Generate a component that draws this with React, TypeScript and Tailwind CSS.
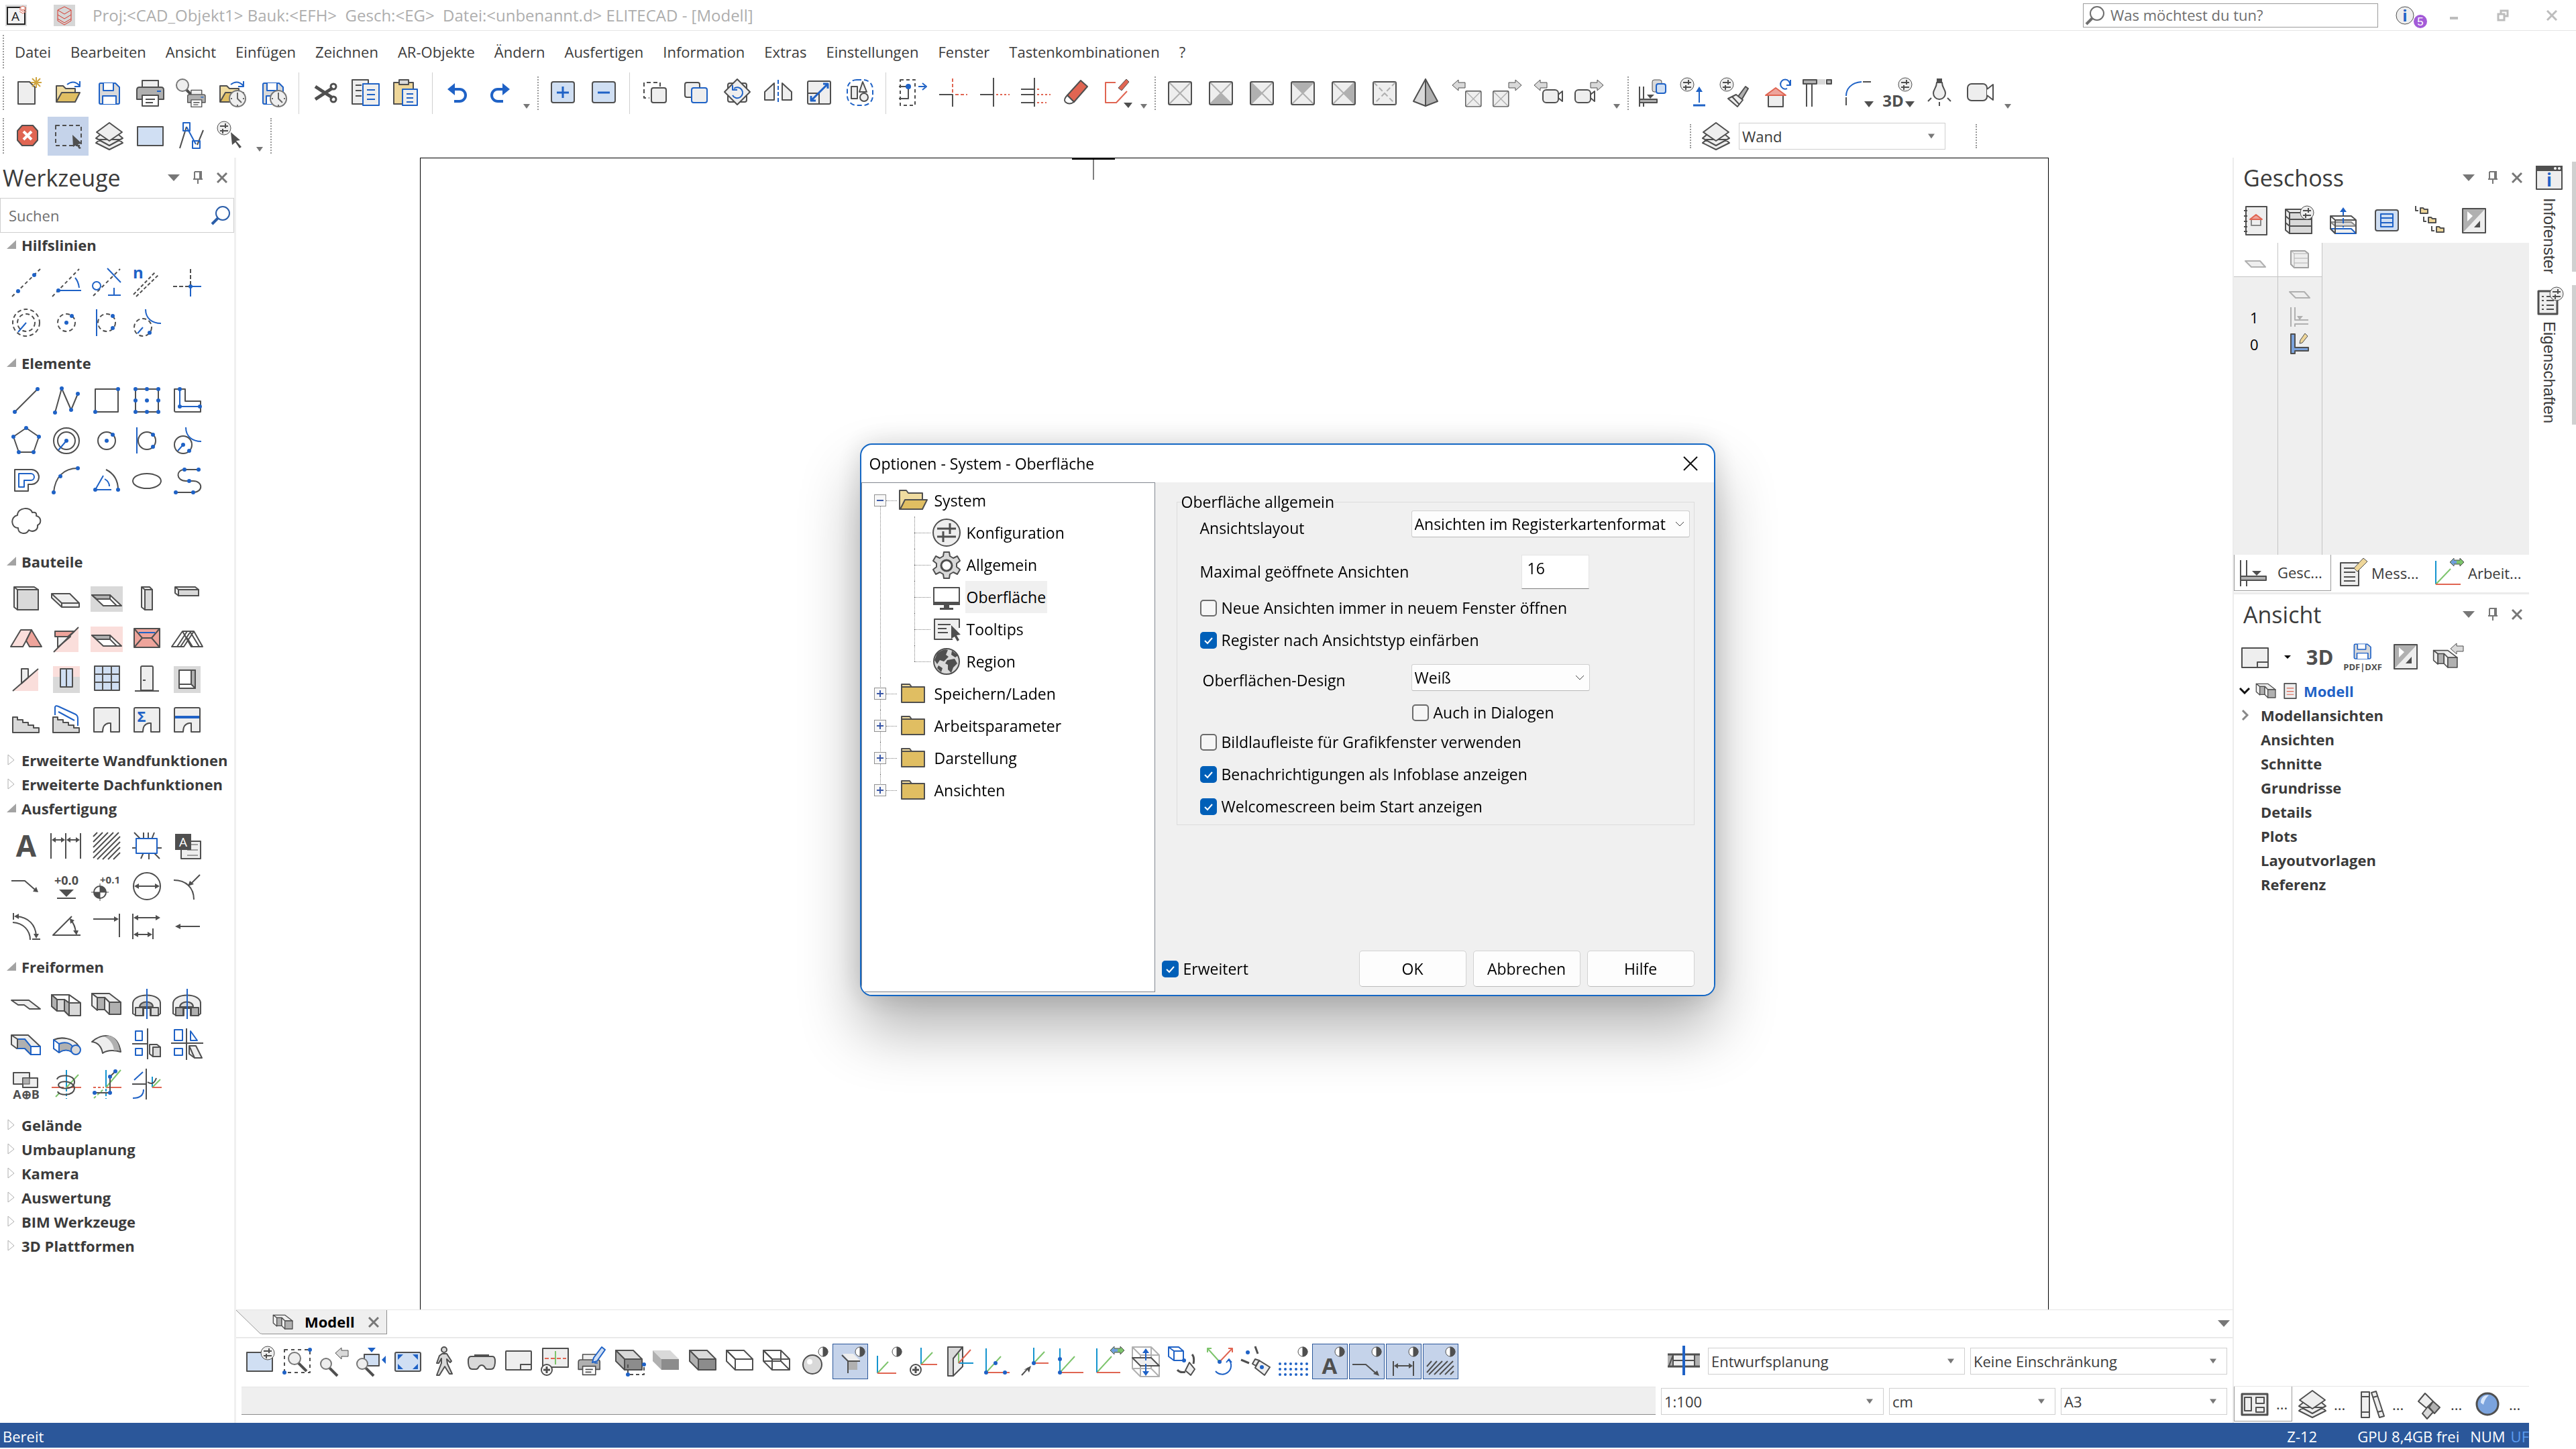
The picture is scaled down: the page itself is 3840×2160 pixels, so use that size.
import React, { useState } from 'react';
import clsx from 'clsx';

const K = '#4f4f4f';
const B = '#1f62c6';
const R = '#e06552';
const G = '#7dc46c';
const C = '#1494cf';
const LIGHT = '#eeeeee';
const MID = '#d9d9d9';
const DARK = '#b0b0b0';
const SKY = '#d0dff3';
const PINK = '#fadedb';
const ROSE = '#eea49b';

interface PProps {
  d: string;
  s?: string;
  f?: string;
  w?: number;
  dash?: string;
}

const P = ({ d, s = K, f = 'none', w = 2, dash }: PProps) => (
  <path d={d} stroke={s} fill={f} strokeWidth={w} strokeDasharray={dash} strokeLinejoin="round" />
);

const O = ({ x, y, r, s = K, f = 'none', w = 2, dash }: { x: number; y: number; r: number; s?: string; f?: string; w?: number; dash?: string }) => (
  <circle cx={x} cy={y} r={r} stroke={s} fill={f} strokeWidth={w} strokeDasharray={dash} />
);

// list of blue anchor points, "x,y x,y"
const Dots = ({ at, r = 3 }: { at: string; r?: number }) => (
  <>
    {at.split(' ').map((pt) => {
      const [x, y] = pt.split(',').map(Number);
      return <circle key={pt} cx={x} cy={y} r={r} fill={B} />;
    })}
  </>
);

const T = ({ x, y, size, fill = K, children }: { x: number; y: number; size: number; fill?: string; children: string }) => (
  <text x={x} y={y} fontSize={size} fontWeight={700} fill={fill} textAnchor="middle" fontFamily="Open Sans, sans-serif">
    {children}
  </text>
);

const Knobs = ({ x, y }: { x: number; y: number }) => (
  <>
    <O x={x} y={y} r={10} f={LIGHT} w={1} />
    <P d={`M${x - 6} ${y - 3}H${x + 6}M${x - 6} ${y + 4}H${x + 6}M${x + 2} ${y - 7}V${y}M${x - 2} ${y + 1}V${y + 8}`} />
  </>
);

const Half = () => (
  <>
    <O x={38} y={10} r={7} f="#fff" w={1} />
    <P d="M38 3A7 7 0 0 1 38 17Z" f={K} w={1} />
  </>
);

const Clock = () => (
  <>
    <O x={32} y={32} r={12} f={LIGHT} w={2} s="#777" />
    <P d="M32 23V32L38 38M22 32H24M40 32H42M32 41V43" w={2} s="#666" />
  </>
);

const Disk = () => (
  <>
    <P d="M9 11Q9 9 11 9H33L39 15V38Q39 40 37 40H11Q9 40 9 38Z" s={B} f={MID} />
    <P d="M15 9V20H30V9" s={B} f="#fff" />
    <P d="M14 40V28H34V40" s={B} f="#fff" />
  </>
);

const Folder = () => (
  <>
    <P d="M6 36V13H16L20 17H34V36Z" f="#f0dca0" />
    <P d="M6 37L14 23H41L34 37Z" f="#e0be62" />
    <P d="M22 11Q32 3 41 13M41 6V14H33" s={B} />
  </>
);

const Solid = () => (
  <>
    <P d="M2 8L10 14V33L2 26Z" f={LIGHT} />
    <P d="M2 8H28L45 21H28L21 14H10Z" f={LIGHT} />
    <P d="M10 14H21V32H10Z" f={DARK} />
    <P d="M21 14L28 21V39L21 32Z" f={LIGHT} />
    <P d="M28 21H45V39H28Z" f={DARK} />
  </>
);

const Layers = () => (
  <>
    <P d="M4 34L24 44L44 34L38 29H10ZM4 27L24 38L44 27L38 22H10Z" f={LIGHT} />
    <P d="M24 4L43 18L24 31L5 18Z" f={LIGHT} />
  </>
);

const XBox = ({ fill }: { fill?: string }) => (
  <>
    <rect x={7} y={7} width={34} height={34} rx={2} fill={LIGHT} />
    {fill && <path d={fill} fill={DARK} />}
    <P d="M8 8L40 40M40 8L8 40" s={DARK} />
    <rect x={7} y={7} width={34} height={34} rx={2} fill="none" stroke={K} strokeWidth={2} />
  </>
);

const Arrow = ({ x, flip = false }: { x: number; flip?: boolean }) => (
  <P
    d={flip ? `M${x} 12L${x - 9} 4V8H${x - 19}V16H${x - 9}V20Z` : `M${x} 12L${x + 9} 4V8H${x + 19}V16H${x + 9}V20Z`}
    f={MID}
    w={1}
  />
);

const Cam = ({ x, y }: { x: number; y: number }) => (
  <>
    <rect x={x} y={y} width={23} height={19} rx={5} fill={LIGHT} stroke={K} strokeWidth={2} />
    <P d={`M${x + 23} ${y + 7}L${x + 29} ${y + 2}V${y + 17}L${x + 23} ${y + 12}`} />
  </>
);

const Cube = ({ side = 'none', front = 'none', s = K }: { side?: string; front?: string; s?: string }) => (
  <>
    <P d="M4 8H30L43 21H17Z" f={side === 'none' ? 'none' : MID} s={s} />
    <P d="M4 8L17 21V37L4 24Z" f={side} s={s} />
    <P d="M17 21H43V37H17Z" f={front} s={s} />
  </>
);

const Arch = () => <P d="M5 8Q5 6 7 6H41Q43 6 43 8V42H30V29H27C20 30 18 36 18 42H5Z" f={LIGHT} />;

const Axes = ({ x = 8, y = 42 }: { x?: number; y?: number }) => (
  <>
    <P d={`M${x} ${y}L${x + 22} ${y - 24}`} s={G} />
    <P d={`M${x} ${y}V${y - 36}`} s={C} />
    <P d={`M${x} ${y}H${x + 35}`} s={R} />
  </>
);

const Lens = ({ x, y, r = 9, s = K }: { x: number; y: number; r?: number; s?: string }) => (
  <>
    <path d={`M${x + r - 3} ${y + r - 2}L${x + r + 9} ${y + r + 10}`} stroke={s} strokeWidth={4} />
    <O x={x} y={y} r={r} f={LIGHT} s="#777" />
  </>
);

const Printer = () => (
  <>
    <P d="M12 5H36V18H12Z" f={LIGHT} />
    <P d="M4 19Q4 15 8 15H40Q44 15 44 19V33H4Z" f={DARK} />
    <P d="M12 27H36V43H12Z" f="#fff" />
    <P d="M17 33H31M17 38H28" />
    <P d="M34 21H40" s={B} />
  </>
);

const icons: Record<string, React.ReactNode> = {
  // main toolbar
  neu: (
    <>
      <P d="M10 7H27L35 15V40H10Z" f={LIGHT} />
      <P d="M37 0V16M29 8H45M31 2L43 14M43 2L31 14" s="#cfa540" />
    </>
  ),
  oeffnen: <Folder />,
  speichern: <Disk />,
  drucken: <Printer />,
  vorschau: (
    <>
      <Lens x={11} y={12} r={9} />
      <g transform="translate(16 16) scale(.66)">
        <Printer />
      </g>
    </>
  ),
  oeffnenZeit: (
    <>
      <Folder />
      <Clock />
    </>
  ),
  speichernZeit: (
    <>
      <Disk />
      <Clock />
    </>
  ),
  schneiden: (
    <>
      <P d="M10 14L36 31M10 33L36 16" w={5} />
      <O x={37} y={14} r={4} w={3} />
      <O x={37} y={33} r={4} w={3} />
    </>
  ),
  kopieren: (
    <>
      <P d="M4 4H28V40H4Z" f={LIGHT} />
      <P d="M9 12H18M9 20H18M9 28H18" />
      <P d="M20 10H44V42H20Z" f={LIGHT} s={B} />
      <P d="M26 19H38M26 26H38M26 33H38" s={B} />
    </>
  ),
  einfuegen: (
    <>
      <P d="M5 8H34V40H5Z" f="#eed699" />
      <P d="M13 4H27V11H13Z" f={MID} />
      <P d="M18 18H40V42H18Z" f={LIGHT} s={B} />
      <P d="M24 25H34M24 31H34M24 37H34" s={B} />
    </>
  ),
  undo: (
    <>
      <P d="M14 18H26A9 9 0 0 1 26 36H18" s={B} w={4} />
      <path d="M8 18L19 9V27Z" fill={B} />
    </>
  ),
  redo: (
    <>
      <P d="M34 18H22A9 9 0 0 0 22 36H30" s={B} w={4} />
      <path d="M40 18L29 9V27Z" fill={B} />
    </>
  ),
  plus: (
    <>
      <rect x={7} y={7} width={34} height={31} rx={3} fill={SKY} stroke={K} strokeWidth={2} />
      <P d="M24 14V31M15 23H33" s={B} w={3} />
    </>
  ),
  minus: (
    <>
      <rect x={7} y={7} width={34} height={31} rx={3} fill={SKY} stroke={K} strokeWidth={2} />
      <P d="M15 23H33" s={B} w={3} />
    </>
  ),
  dupl: (
    <>
      <P d="M31 14V8H7V31H15" dash="6 4" />
      <rect x={18} y={16} width={22} height={22} rx={3} fill={LIGHT} stroke={K} strokeWidth={2} />
    </>
  ),
  duplBlau: (
    <>
      <rect x={7} y={8} width={22} height={22} rx={3} fill={LIGHT} stroke={K} strokeWidth={2} />
      <rect x={17} y={16} width={23} height={22} rx={3} fill={LIGHT} stroke={B} strokeWidth={2} />
    </>
  ),
  drehen: (
    <>
      <rect x={10} y={9} width={28} height={28} rx={3} fill={LIGHT} stroke={K} strokeWidth={2} />
      <P d="M24 3L43 22L24 41L5 22Z" f={LIGHT} />
      <P d="M19 17A8 8 0 1 1 17 27M17 12V19H24" s={B} />
    </>
  ),
  spiegeln: (
    <>
      <P d="M18 9V34H4V22ZM30 9V34H44V22Z" f={LIGHT} />
      <P d="M24 4V40" s={B} dash="6 3" />
    </>
  ),
  skalieren: (
    <>
      <rect x={7} y={6} width={34} height={34} rx={2} fill={LIGHT} stroke={K} strokeWidth={2} />
      <P d="M7 24H24V40" />
      <P d="M12 35L37 10M12 28V35H19M30 10H37V17" s={B} w={3} />
    </>
  ),
  gruppe: (
    <>
      <rect x={5} y={4} width={38} height={38} rx={14} fill="none" stroke={B} strokeWidth={2} strokeDasharray="7 4" />
      <P d="M11 14H20V32H11ZM28 7L34 22H23Z" f={LIGHT} />
      <O x={30} y={30} r={6} f={LIGHT} />
    </>
  ),
  strecken: (
    <>
      <P d="M7 4H29V42H7Z" dash="5 4" />
      <P d="M5 14H19V32H5" />
      <P d="M34 14H44M40 9L46 14L40 19" s={B} />
      <Dots at="19,14" r={4} />
    </>
  ),
  trim1: (
    <>
      <P d="M4 26H24V44" w={2} />
      <P d="M24 2V24M28 26H46" s={R} dash="5 3" />
    </>
  ),
  trim2: (
    <>
      <P d="M24 1V44M4 26H24" w={2} />
      <P d="M28 26H48" s={R} dash="3 3" />
    </>
  ),
  trim3: (
    <>
      <P d="M24 1V44M4 18H24M4 26H24M4 38H24" />
      <P d="M28 18H34M28 26H48M28 38H42" s={R} dash="3 3" />
    </>
  ),
  radierer: (
    <>
      <P d="M32 5L42 14L22 37L12 27Z" f={R} />
      <P d="M12 27L22 37Q15 42 9 37Q6 33 12 27Z" f="#fff" />
    </>
  ),
  radierLinie: (
    <>
      <P d="M23 8H8V38H24L40 21" s={R} />
      <P d="M39 3L43 7L32 20L27 16Z" f={R} w={1} />
      <path d="M35 38H48L42 46Z" fill={K} />
    </>
  ),
  box0: <XBox />,
  boxB: <XBox fill="M24 24L41 41H7Z" />,
  boxL: <XBox fill="M7 7L24 24L7 41Z" />,
  boxT: <XBox fill="M7 7H41L24 24Z" />,
  boxR: <XBox fill="M41 7L24 24L41 41Z" />,
  boxX: (
    <>
      <rect x={7} y={7} width={34} height={34} rx={2} fill={LIGHT} stroke={K} strokeWidth={2} />
      <P d="M8 8L40 40M40 8L8 40" s={DARK} dash="7 4" />
    </>
  ),
  pyramide: (
    <>
      <P d="M24 3L42 36L24 43Z" f={DARK} />
      <P d="M24 3L6 36L24 43Z" f={MID} />
    </>
  ),
  boxVor: (
    <>
      <Arrow x={3} />
      <g transform="translate(18 16) scale(.68)">
        <XBox />
      </g>
    </>
  ),
  boxNach: (
    <>
      <Arrow x={45} flip />
      <g transform="translate(-2 16) scale(.68)">
        <XBox />
      </g>
    </>
  ),
  camVor: (
    <>
      <Arrow x={3} />
      <Cam x={16} y={19} />
    </>
  ),
  camNach: (
    <>
      <Arrow x={45} flip />
      <Cam x={3} y={19} />
    </>
  ),
  wandKopie: (
    <>
      <rect x={23} y={4} width={14} height={18} rx={3} fill={MID} stroke={K} />
      <rect x={29} y={10} width={14} height={14} rx={3} fill={SKY} stroke={B} strokeWidth={2} />
      <P d="M4 14V44M10 14V32M10 38V44" />
      <P d="M4 33H30V38H4Z" f={DARK} />
      <path d="M15 26H26L20 32Z" fill={K} />
    </>
  ),
  hoehe: (
    <>
      <Knobs x={14} y={11} />
      <P d="M32 18V38" s={B} />
      <path d="M32 14L37 22H27Z" fill={B} />
      <P d="M23 42H41" s={B} w={3} />
    </>
  ),
  pinsel: (
    <>
      <Knobs x={12} y={11} />
      <P d="M28 30L40 14L44 17L34 34" f={DARK} />
      <P d="M14 32L26 26L36 34L28 44Z" f={LIGHT} />
      <P d="M20 29L31 41" />
    </>
  ),
  hausDrehen: (
    <>
      <P d="M13 27H35V44H13Z" f={LIGHT} />
      <P d="M24 16L39 27H9Z" f={ROSE} s={R} />
      <P d="M41 17A7 7 0 1 1 45 12M46 4V12H40" s={B} />
    </>
  ),
  traeger: (
    <>
      <P d="M4 4H24V10H4Z" f={DARK} />
      <P d="M26 4H36V10H26Z" f={MID} s={MID} />
      <P d="M39 4H46V10H39Z" f={DARK} />
      <P d="M9 10V44M17 10V44" />
    </>
  ),
  bogenWand: (
    <>
      <P d="M30 7C14 8 7 18 7 28" s={B} />
      <P d="M32 7H44M7 30V42" />
      <path d="M34 36H48L41 45Z" fill={K} />
    </>
  ),
  dreiD: (
    <>
      <Knobs x={34} y={11} />
      <T x={16} y={44} size={24}>
        3D
      </T>
      <path d="M34 36H48L41 45Z" fill={K} />
    </>
  ),
  lampe: (
    <>
      <path d="M20 2H28V8H20Z" fill={K} />
      <P d="M20 8C20 16 15 18 15 24A9 9 0 0 0 33 24C33 18 28 16 28 8Z" f={LIGHT} />
      <P d="M12 31L7 36M36 31L41 36M24 37V43" />
    </>
  ),
  kamera: (
    <>
      <rect x={5} y={10} width={29} height={25} rx={6} fill={LIGHT} stroke={K} strokeWidth={2} />
      <P d="M34 18L43 11V34L34 27" f="#fff" />
    </>
  ),
  // second toolbar
  stop: (
    <>
      <P d="M16 8H32L39 16V30L32 38H16L9 30V16Z" f={R} s={K} />
      <P d="M18 17L30 29M30 17L18 29" s="#fff" w={4} />
    </>
  ),
  auswahl: (
    <>
      <P d="M5 8H43V38H5Z" dash="6 4" />
      <path d="M30 22L44 35L38 36L43 42L40 43L36 37L31 40Z" fill={K} />
    </>
  ),
  ebenen: <Layers />,
  rechteck: <P d="M5 10H43V38H5Z" f={SKY} />,
  polySel: (
    <>
      <P d="M7 42L17 10" />
      <P d="M33 37L42 15" />
      <P d="M17 10L31 36M12 4H22V16H12ZM26 31H37V42H26Z" s={B} />
    </>
  ),
  pickSet: (
    <>
      <Knobs x={12} y={12} />
      <path d="M22 18L36 30L30 31L38 40L35 42L29 33L24 37Z" fill={K} />
    </>
  ),
  // Hilfslinien
  h1: (
    <>
      <P d="M3 45L45 4" dash="5 4" />
      <Dots at="12,37 36,13" />
    </>
  ),
  h2: (
    <>
      <P d="M3 45L43 4" dash="5 4" />
      <P d="M12 36H46M37 17Q42 23 43 32" s={B} />
      <Dots at="12,36" />
    </>
  ),
  h3: (
    <>
      <P d="M4 44L44 4" dash="5 4" />
      <P d="M25 3L45 24M26 43H45M35 32V43" s={B} />
      <O x={9} y={29} r={6} s={B} />
    </>
  ),
  h4: (
    <>
      <P d="M4 42L37 8M8 45L42 12" dash="5 3" />
      <T x={11} y={18} size={24} fill={B}>
        n
      </T>
    </>
  ),
  h5: (
    <>
      <P d="M3 30H29M29 4V30" dash="6 3" />
      <P d="M29 30H45M29 30V45" s={B} />
      <Dots at="29,30" />
    </>
  ),
  h6: (
    <>
      <O x={24} y={24} r={20} dash="6 4" />
      <O x={24} y={24} r={13} dash="6 4" />
      <P d="M24 24L12 38" s={B} />
    </>
  ),
  h7: (
    <>
      <O x={24} y={24} r={13} dash="6 4" />
      <Dots at="24,24 32,14" />
    </>
  ),
  h8: (
    <>
      <P d="M9 4V44" s={B} />
      <O x={24} y={24} r={13} dash="6 4" />
      <Dots at="33,14 33,32" />
    </>
  ),
  h9: (
    <>
      <O x={18} y={31} r={13} dash="6 4" />
      <P d="M18 31L10 40M22 4C22 18 32 25 45 25" s={B} />
      <Dots at="28,39" />
    </>
  ),
  // Elemente
  e1: (
    <>
      <P d="M7 41L41 7" />
      <Dots at="7,41 41,7" />
    </>
  ),
  e2: (
    <>
      <P d="M7 42L17 6L31 38L41 14" />
      <Dots at="7,42 17,6 31,38 41,14" />
    </>
  ),
  e3: (
    <>
      <P d="M7 7H41V41H7Z" />
      <Dots at="41,7 7,41" />
    </>
  ),
  e4: (
    <>
      <P d="M7 7H41V41H7Z" />
      <Dots at="7,7 24,7 41,7 7,24 24,24 41,24 7,41 24,41 41,41" />
    </>
  ),
  e5: (
    <>
      <P d="M5 7H21V25H44V41H7Q5 41 5 39Z" />
      <P d="M13 7V33H43" s={B} />
      <Dots at="13,7 13,33 43,33" />
    </>
  ),
  e6: (
    <>
      <P d="M24 5L43 18L35 41H13L5 18Z" />
      <Dots at="24,5 43,18 35,41 13,41 5,18" />
    </>
  ),
  e7: (
    <>
      <O x={24} y={24} r={19} />
      <O x={24} y={24} r={13} />
      <P d="M24 24L12 38" s={B} />
      <Dots at="24,24" />
    </>
  ),
  e8: (
    <>
      <O x={24} y={24} r={13} />
      <Dots at="24,24 33,15" />
    </>
  ),
  e9: (
    <>
      <P d="M9 4V43" s={B} />
      <O x={24} y={24} r={13} />
      <Dots at="33,15 33,33" />
    </>
  ),
  e10: (
    <>
      <O x={18} y={30} r={13} />
      <P d="M18 30L10 39M22 4C22 18 32 25 45 25" s={B} />
      <Dots at="18,30 27,39" />
    </>
  ),
  e11: (
    <>
      <P d="M7 7H32A11 11 0 0 1 32 29H27V39H7Z" />
      <P d="M13 13H31A5 5 0 0 1 31 23H21V33H13Z" s={B} />
    </>
  ),
  e12: (
    <>
      <P d="M5 41C7 18 20 5 41 5" />
      <Dots at="5,41 15,17 41,5" />
    </>
  ),
  e13: (
    <>
      <P d="M23 7Q41 16 41 37" />
      <P d="M19 16L7 37H31M21 21Q28 25 28 32" s={B} />
      <Dots at="7,37 41,37" />
    </>
  ),
  e14: <ellipse cx={24} cy={24} rx={21} ry={11} fill="none" stroke={K} strokeWidth={2} />,
  e15: (
    <>
      <P d="M41 7H20C7 7 7 24 22 24H33C48 24 48 41 33 41H7" />
      <Dots at="20,7 41,7 27,24 33,41 7,41" />
    </>
  ),
  e16: <P d="M11 15C11 3 31 2 33 11C38 10 40 12 39 16C47 18 47 27 41 30C42 38 33 41 28 37C24 45 12 43 12 34C1 34 0 17 11 15Z" />,
  // Bauteile
  b1: (
    <>
      <P d="M6 6H36L42 10V40H11L6 36Z" f={LIGHT} />
      <P d="M11 10H42V40H11Z" f={MID} />
      <P d="M6 6L11 10" />
    </>
  ),
  b2: (
    <>
      <P d="M2 16H29L43 30V36H17L2 22Z" f={LIGHT} />
      <P d="M2 16L17 30H43M17 30V36" />
    </>
  ),
  b3: (
    <>
      <rect x={0} y={5} width={48} height={38} fill={MID} />
      <P d="M2 18H29L46 34H19Z" f="#fff" />
      <P d="M2 18H29V24H9Z" f={DARK} />
      <P d="M29 24L39 34" />
    </>
  ),
  b4: (
    <>
      <P d="M16 6H28L32 10V40H21L16 36Z" f={LIGHT} />
      <P d="M21 10H32V40H21ZM16 6L21 10" f={MID} />
    </>
  ),
  b5: (
    <>
      <P d="M6 6H36L41 10V19H11L6 15Z" f={LIGHT} />
      <P d="M11 10H41V19H11ZM6 6L11 10" f={MID} />
    </>
  ),
  b6: (
    <>
      <P d="M1 35L16 10H32L24 26L19 35Z" f={PINK} />
      <P d="M32 10L47 35H29L24 26Z" f={ROSE} />
    </>
  ),
  b7: (
    <>
      <path d="M42 6V43H5Z" fill={PINK} />
      <P d="M11 20V36L30 20Z" f={LIGHT} />
      <P d="M7 12H36L26 20H7Z" f={ROSE} />
      <P d="M42 6L5 43" />
    </>
  ),
  b8: (
    <>
      <rect x={0} y={5} width={48} height={38} fill={PINK} />
      <P d="M2 18H29L46 34H19Z" f="#fff" />
      <P d="M2 18H29V24H9Z" f={DARK} />
      <P d="M29 24L39 34" />
    </>
  ),
  b9: (
    <>
      <P d="M5 8H43V36H5Z" f={ROSE} />
      <P d="M5 8L17 22L5 36M43 8L31 22L43 36M17 22H31" />
      <P d="M12 14H36" s={B} />
    </>
  ),
  b10: (
    <>
      <P d="M1 35H19L34 12L47 35H30L17 12Z" />
      <P d="M9 35L24 12M14 35L28 14M24 22L32 35M17 12H34M28 12L42 35" />
    </>
  ),
  b11: (
    <>
      <path d="M42 8V41H6Z" fill={PINK} />
      <P d="M17 30V8H27V21Z" f={LIGHT} />
      <P d="M42 8L4 41" />
    </>
  ),
  b12: (
    <>
      <rect x={4} y={4} width={40} height={16} fill={PINK} />
      <rect x={4} y={20} width={40} height={24} fill={MID} />
      <P d="M15 8H33V35H15ZM24 8V35" f={SKY} />
    </>
  ),
  b13: <P d="M6 4H43V40H6ZM18 4V40M31 4V40M6 16H43M6 28H43" f={SKY} />,
  b14: (
    <>
      <P d="M15 40V6Q15 4 17 4H31Q33 4 33 6V40Z" f={LIGHT} />
      <P d="M6 41H42M18 25H22" />
    </>
  ),
  b15: (
    <>
      <rect x={4} y={4} width={40} height={40} fill={MID} />
      <P d="M12 10H36V37H12Z" f="#fff" />
      <P d="M30 10H36V37L30 31Z" f={DARK} />
      <P d="M12 31H30" />
    </>
  ),
  b16: <P d="M4 20H11V24H19V28H27V32H35V36H43V43H4Z" f={MID} />,
  b17: (
    <>
      <P d="M4 20H11V24H19V28H27V32H35V36H43V43H4Z" f={MID} />
      <P d="M7 17V5Q8 2 12 4L38 16Q41 18 41 22V33M12 12L36 25" s={B} />
    </>
  ),
  b18: <Arch />,
  b19: (
    <>
      <Arch />
      <T x={16} y={27} size={22} fill={B}>
        Σ
      </T>
    </>
  ),
  b20: (
    <>
      <Arch />
      <P d="M6 20H42" s={B} w={4} />
    </>
  ),
  // Ausfertigung
  a1: (
    <T x={24} y={40} size={44}>
      A
    </T>
  ),
  a2: (
    <>
      <P d="M1 5V43M23 5V43M45 5V43M4 15H20M26 15H42" />
      <path d="M2 15L8 11V19ZM22 15L16 11V19ZM24 15L30 11V19ZM44 15L38 11V19Z" fill={K} />
    </>
  ),
  a3: <P d="M4 10L10 4M4 18L18 4M4 26L26 4M4 34L34 4M4 42L42 4M10 44L44 10M18 44L44 18M26 44L44 26M34 44L44 34" />,
  a4: (
    <>
      <P d="M2 27H46M5 4L43 43M19 4V14M26 4V14M35 4L31 14M27 34V44M15 43L19 34" />
      <P d="M8 13H39V35H8Z" f="#fff" s={B} />
    </>
  ),
  a5: (
    <>
      <P d="M15 17H44V43H15Z" f={LIGHT} />
      <P d="M24 22H40M24 30H40M24 38H40" w={1} />
      <rect x={6} y={6} width={24} height={24} fill={K} />
      <text x={18} y={25} fontSize={19} fill="#fff" textAnchor="middle" fontFamily="Open Sans, sans-serif">
        A
      </text>
    </>
  ),
  a6: (
    <>
      <P d="M2 16H22L38 30" />
      <path d="M42 33L34 32L39 25Z" fill={K} />
    </>
  ),
  a7: (
    <>
      <T x={24} y={22} size={18}>
        +0.0
      </T>
      <path d="M13 29H35L24 40Z" fill={K} />
      <P d="M10 42H38" />
    </>
  ),
  a8: (
    <>
      <T x={29} y={20} size={15}>
        +0.1
      </T>
      <O x={14} y={33} r={9} f="#fff" />
      <path d="M14 33V24A9 9 0 0 1 23 33ZM14 33V42A9 9 0 0 1 5 33Z" fill={K} />
      <P d="M1 33H27M14 20V46" w={1} />
    </>
  ),
  a9: (
    <>
      <O x={24} y={24} r={20} />
      <P d="M8 24H40" />
      <path d="M5 24L12 20V28ZM43 24L36 20V28Z" fill={K} />
    </>
  ),
  a10: (
    <>
      <P d="M4 15C22 15 34 26 34 44M43 7L30 20" />
      <path d="M25 24L28 16L34 21Z" fill={K} />
    </>
  ),
  a11: (
    <>
      <P d="M4 18C20 19 30 30 30 44M9 9C28 10 38 22 39 38M5 4V14M33 43H45" />
      <path d="M6 9L13 5V13ZM39 42L35 35H43Z" fill={K} />
    </>
  ),
  a12: (
    <>
      <P d="M32 9L4 37H45M31 15Q37 22 38 33" />
      <path d="M29 12L36 15L30 20ZM39 37L34 30L42 30Z" fill={K} />
    </>
  ),
  a13: (
    <>
      <P d="M4 13H38M43 5V40" />
      <path d="M42 13L35 9V17Z" fill={K} />
    </>
  ),
  a14: (
    <>
      <P d="M3 5V43M8 11H40M8 36H28M33 27V43" />
      <path d="M4 11L11 7V15ZM44 11L37 7V15ZM4 36L11 32V40ZM32 36L25 32V40Z" fill={K} />
    </>
  ),
  a15: (
    <>
      <P d="M12 24H43" />
      <path d="M6 24L14 20V28Z" fill={K} />
    </>
  ),
  // Freiformen
  f1: <P d="M2 18H28L45 31H29L21 25H12Z" f={LIGHT} />,
  f2: (
    <>
      <P d="M2 10H28L45 22V41H28L21 34H10L2 27Z" f={MID} />
      <P d="M2 10H28L45 22H28L21 17H10Z" f="#fff" />
      <P d="M2 10L10 17V34L2 27ZM21 17L28 22V41L21 34Z" f={DARK} />
      <P d="M28 10V22" />
    </>
  ),
  f3: <Solid />,
  f4: (
    <>
      <P d="M3 24C2 6 46 6 44 24V38L40 41H29V30H19V41H8L3 38Z" f={LIGHT} />
      <P d="M13 28C14 18 33 18 33 28Z" f={DARK} />
      <P d="M7 29H18V41H7ZM30 29H41V41H30Z" f={MID} />
      <P d="M24 1V46" s={B} />
    </>
  ),
  f5: (
    <>
      <P d="M3 24C2 6 46 6 44 24V38L40 41H29V30H19V41H8L3 38Z" f={LIGHT} />
      <P d="M13 28C14 18 33 18 33 28Z" f={MID} />
      <P d="M7 29H18V41H7ZM30 29H41V41H30Z" f={DARK} />
      <P d="M24 1V46" s={B} />
    </>
  ),
  f6: (
    <>
      <P d="M2 10H27L45 27V39H31L22 30H10L2 24Z" f={LIGHT} />
      <P d="M11 16H22L31 27V39L22 30H11Z" f={DARK} s={B} />
      <P d="M31 27H45V39H31Z" f="#fff" s={B} />
      <P d="M2 10L11 16V30" />
    </>
  ),
  f7: (
    <>
      <P d="M5 17C16 12 34 14 42 26V34C32 30 20 31 13 36L5 30Z" f={LIGHT} />
      <P d="M13 23C22 19 30 22 33 27V36C26 31 19 32 13 36Z" f={DARK} s={B} />
      <P d="M5 17L13 23V36L5 30Z" f="#fff" s={B} />
      <O x={38} y={32} r={7} s={B} f={MID} />
    </>
  ),
  f8: (
    <>
      <P d="M2 20C16 7 40 5 45 35C34 32 24 33 18 37C16 26 10 21 2 20Z" f={LIGHT} />
      <path d="M20 12C32 18 34 26 35 33L43 33C43 20 34 11 27 11Z" fill={DARK} />
    </>
  ),
  f9: (
    <>
      <P d="M2 23H25M25 0V46" />
      <P d="M7 4H17V18H7ZM7 30H17V40H7Z" s={B} />
      <P d="M28 24H39L44 28V42H33L28 38Z" f={LIGHT} />
      <P d="M33 28H44V42H33Z" f={MID} />
    </>
  ),
  f10: (
    <>
      <P d="M0 22H48M23 0V47" />
      <P d="M5 2H17V18H5ZM5 30H17V40H5ZM29 4V18H39Z" s={B} />
      <P d="M27 26H37L46 44H35L27 38Z" f={LIGHT} />
      <P d="M27 26L35 44" />
    </>
  ),
  f11: (
    <>
      <P d="M5 6H29V23H5Z" f={LIGHT} />
      <P d="M19 14H41V28H19Z" f={LIGHT} />
      <rect x={19} y={14} width={10} height={9} fill={DARK} stroke={K} />
      <T x={24} y={45} size={18}>
        A⊕B
      </T>
    </>
  ),
  f12: (
    <>
      <P d="M24 2V28" s={C} />
      <P d="M24 30V45" s={C} dash="4 3" />
      <P d="M24 28H46M2 28H20" s={R} />
      <P d="M24 28L42 9M8 42L14 36" s={G} />
      <P d="M10 16C12 8 36 8 36 20C36 32 12 32 12 24C14 16 36 18 36 30C34 42 12 40 11 34" />
    </>
  ),
  f13: (
    <>
      <P d="M23 2V28" s={C} />
      <P d="M23 30V45" s={C} dash="4 3" />
      <P d="M23 28H46" s={R} />
      <P d="M4 28H20" s={R} dash="4 3" />
      <P d="M23 28L45 2" s={G} />
      <P d="M5 44L20 30" s={G} dash="4 3" />
      <P d="M6 36H29V12L37 4" />
      <Dots at="6,36 29,36 29,12 37,4" />
    </>
  ),
  f14: (
    <>
      <P d="M2 23H23M23 0V46" />
      <P d="M5 17L18 5M3 44Q19 44 19 31" s={B} />
      <P d="M32 28V12" s={C} />
      <P d="M32 28L44 16" s={G} />
      <P d="M32 28H46" s={R} />
      <P d="M25 20Q34 26 38 14" />
    </>
  ),
  // view toolbar
  v1: (
    <>
      <P d="M4 11H42V39H4Z" f={SKY} />
      <Knobs x={35} y={12} />
    </>
  ),
  v2: (
    <>
      <P d="M5 7H43V41H5Z" dash="5 5" />
      <Dots at="43,7 5,41" />
      <Lens x={20} y={20} r={9} />
    </>
  ),
  v3: (
    <>
      <Lens x={12} y={28} r={8} />
      <P d="M26 12L35 4V8H45V17H35V21Z" f={MID} w={1} />
    </>
  ),
  v4: (
    <>
      <path d="M19 4H31L25 11ZM46 16V28L40 22Z" fill={B} />
      <P d="M14 14H36V31H14Z" f={SKY} />
      <Lens x={11} y={28} r={8} />
    </>
  ),
  v5: (
    <>
      <rect x={5} y={11} width={38} height={28} rx={2} fill={SKY} stroke={K} strokeWidth={2} />
      <path d="M9 14H17L9 22ZM39 14H31L39 22ZM9 36H17L9 28ZM39 36H31L39 28Z" fill={B} />
    </>
  ),
  v6: (
    <>
      <O x={23} y={7} r={4} f={MID} />
      <P d="M20 13H27L34 24L32 26L27 21L28 28L35 43H31L24 32L16 45H12L19 27V20L15 27H12L16 16Z" f={MID} />
    </>
  ),
  v7: (
    <>
      <path d="M13 14H35V19H13Z" fill={K} />
      <P d="M8 17H40Q44 17 44 24Q44 36 38 36H32Q30 36 28 32Q24 28 20 32Q18 36 16 36H10Q4 36 4 24Q4 17 8 17Z" f={MID} />
    </>
  ),
  v8: (
    <>
      <rect x={5} y={9} width={38} height={28} rx={1} fill={LIGHT} stroke={K} strokeWidth={2} />
      <P d="M43 29H27V37" />
    </>
  ),
  v9: (
    <>
      <P d="M5 5H43V33H5Z" f={LIGHT} />
      <P d="M24 9V29" s={G} />
      <P d="M8 20H40" s={R} dash="6 3" />
      <O x={11} y={37} r={8} f="#fff" />
      <P d="M11 32V42M6 37H16" w={3} />
    </>
  ),
  v10: (
    <>
      <g transform="translate(0 10) scale(.8)">
        <Printer />
      </g>
      <P d="M38 3L43 7L31 24L24 26L26 19Z" f={SKY} s={B} />
    </>
  ),
  v11: (
    <>
      <Cube side={DARK} front="#8c8c8c" />
      <P d="M22 29V44H46V29" dash="5 4" />
      <Dots at="46,29 22,44" />
    </>
  ),
  v12: <Cube side={DARK} front="#8c8c8c" s="none" />,
  v13: <Cube side={DARK} front="#8c8c8c" />,
  v14: <Cube />,
  v15: (
    <>
      <Cube />
      <P d="M30 8V24L43 37M4 24H30" />
    </>
  ),
  v16: (
    <>
      <O x={22} y={29} r={14} f={MID} />
      <circle cx={18} cy={25} r={4} fill="#fff" />
      <Half />
    </>
  ),
  v17: (
    <>
      <path d="M12 13H28L38 23H21Z" fill={LIGHT} />
      <rect x={20} y={24} width={14} height={13} fill={DARK} />
      <P d="M11 15L20 24H38M20 24V42" />
      <Half />
    </>
  ),
  v18: (
    <>
      <P d="M9 42V16" s={C} />
      <P d="M9 42L25 25" s={G} />
      <P d="M9 42H37" s={R} />
      <Half />
    </>
  ),
  v19: (
    <>
      <P d="M19 29V4" s={C} />
      <P d="M19 29L36 11" s={G} />
      <P d="M19 29H43" s={R} />
      <O x={11} y={37} r={8} f="#fff" />
      <P d="M11 32V42M6 37H16" w={3} />
    </>
  ),
  v20: (
    <>
      <P d="M4 3H26V12L12 20V46H4Z" f={MID} />
      <P d="M12 20L26 3V32L12 46Z" f={LIGHT} />
      <P d="M20 27H42" s={C} />
      <P d="M20 27V12" s={G} />
      <P d="M20 27L38 7" s={R} />
    </>
  ),
  v21: (
    <>
      <Axes x={6} y={41} />
      <Dots at="6,41 20,27 34,41" />
    </>
  ),
  v22: (
    <>
      <P d="M22 27V4" s={C} />
      <P d="M22 27L38 10" s={G} />
      <P d="M22 27H44" s={R} />
      <Dots at="22,27" />
      <P d="M4 45L14 34" />
      <path d="M18 31L15 41L12 36L7 37Z" fill={K} />
    </>
  ),
  v23: (
    <>
      <Axes x={6} y={41} />
      <Dots at="6,41 6,21" />
    </>
  ),
  v24: (
    <>
      <Axes x={6} y={41} />
      <P d="M26 8L32 2V5H41V2L47 8L41 14V11H32V14Z" f={G} w={1} />
      <path d="M27 8L32 3V6H37V10H32V13Z" fill="#6f9ddf" />
    </>
  ),
  v25: (
    <>
      <P d="M4 3H32L44 15V47H16L4 35ZM4 3L16 15H44M16 15V47M32 3V35H4M32 35L44 47" s={DARK} />
      <P d="M4 19H32L44 31H16Z" f={LIGHT} />
      <P d="M24 9V42" s={B} dash="14 5" />
      <path d="M24 5L29 12H19ZM24 46L29 39H19Z" fill={B} />
    </>
  ),
  v26: (
    <>
      <P d="M3 3H18L25 9V23H11L3 17ZM3 3L11 9H25M11 9V23" s={B} />
      <P d="M34 26L42 36L36 45L28 38Z" f={LIGHT} />
      <P d="M40 28Q42 18 38 14M28 40Q20 42 16 37" w={3} />
      <Dots at="26,23" />
    </>
  ),
  v27: (
    <>
      <P d="M24 25L6 5M6 11V5H12" s={G} />
      <P d="M24 25L43 5M43 11V5H37" s={R} />
      <P d="M18 39A11 11 0 0 0 38 22M34 26L38 21L42 26" s={B} />
      <Dots at="24,25" />
    </>
  ),
  v28: (
    <>
      <P d="M22 2L26 13M1 22L13 27" w={3} />
      <P d="M28 23L44 33L36 45L22 34Z" f={LIGHT} />
      <P d="M22 21L28 23L23 31L18 28Z" f={LIGHT} />
      <Dots at="11,11 32,33" />
    </>
  ),
  v29: (
    <>
      <Half />
      <Dots r={2} at="4,28 12,28 20,28 28,28 36,28 44,28 4,36 12,36 20,36 28,36 36,36 44,36 4,44 12,44 20,44 28,44 36,44 44,44" />
    </>
  ),
  v30: (
    <>
      <T x={23} y={43} size={33}>
        A
      </T>
      <Half />
    </>
  ),
  v31: (
    <>
      <P d="M2 29H22L38 43" />
      <path d="M42 46L33 43L39 38Z" fill={K} />
      <Half />
    </>
  ),
  v32: (
    <>
      <P d="M8 24V46M38 24V46M12 31H34" />
      <path d="M9 31L15 27V35ZM37 31L31 27V35Z" fill={K} />
      <Half />
    </>
  ),
  v33: (
    <>
      <P d="M3 32L10 24M3 41L18 24M6 44L26 24M14 44L34 24M22 44L42 24M30 44L43 31M38 44L43 39" />
      <Half />
    </>
  ),
  wandtyp: (
    <>
      <P d="M0 13H48V33H0Z" f={LIGHT} s="none" />
      <path d="M0 13H8V33H0ZM40 13H48V33H40Z" fill={DARK} />
      <P d="M0 14H48M0 32H48" w={3} />
      <P d="M8 14V32M40 14V32M8 23H40M2 31L8 15" />
      <P d="M24 1V45" s={B} w={4} />
    </>
  ),
  // storey panel
  g1: (
    <>
      <P d="M9 3H40V45H9Z" f={LIGHT} />
      <P d="M6 9H11M6 17H11M6 25H11M6 33H11M6 40H11" />
      <P d="M17 22H31V31H17Z" f={LIGHT} s="#888" />
      <P d="M24 15L33 22H15Z" f={ROSE} s={R} />
    </>
  ),
  g2: (
    <>
      <P d="M3 7H36L42 12V43H9L3 38Z" f={LIGHT} />
      <P d="M9 12H42V43H9Z" f={MID} />
      <P d="M3 7L9 12M9 22H42M9 32H42M3 17L9 22M3 27L9 32" />
      <Knobs x={35} y={12} />
    </>
  ),
  g3: (
    <>
      <P d="M5 36H36L43 43H12Z" s={B} f={LIGHT} />
      <P d="M5 26H36L43 32H12Z" f={MID} s="#888" />
      <P d="M5 17H36L43 23H12Z" f="#fff" />
      <P d="M5 17V36L12 43V23M43 23V43" />
      <P d="M24 8V34" s={B} dash="8 4" />
      <path d="M24 4L29 11H19Z" fill={B} />
    </>
  ),
  g4: (
    <>
      <rect x={7} y={8} width={34} height={31} rx={3} fill={SKY} stroke={K} strokeWidth={2} />
      <P d="M15 14H33V33H15ZM15 20H33M15 27H33" s={B} />
    </>
  ),
  g5: (
    <>
      <P d="M2 2V9H6M14 18V25H18M26 32V39H30" />
      <P d="M9 5H13L15 7H20V13H9ZM21 19H25L27 21H32V27H21ZM33 33H37L39 35H44V41H33Z" f="#eed699" />
    </>
  ),
  g6: (
    <>
      <P d="M7 6H41V42H7Z" f={LIGHT} />
      <path d="M8 7H40L8 41Z" fill={DARK} />
      <path d="M14 10L22 17L14 25Z" fill="#fff" />
      <path d="M24 34L33 24V34Z" fill={K} />
    </>
  ),
  platte: <P d="M9 26H31L39 35H18Z" f={LIGHT} s={DARK} />,
  gebaeude: (
    <>
      <P d="M11 11H32L37 15V36H16L11 31Z" f={LIGHT} s="#a0a0a0" />
      <P d="M11 11L16 15H37M16 15V36M16 22H37M16 29H37" s={DARK} w={1} />
    </>
  ),
  wandGrau: (
    <>
      <P d="M11 9V38M17 9V28H37M37 34H17V38" s={DARK} />
      <path d="M20 22H29L24 28Z" fill={DARK} />
    </>
  ),
  wandBlau: (
    <>
      <P d="M11 9H17V29H37V34H17V38H11Z" f="#7ba3dd" />
      <P d="M32 8L36 12L28 22L24 23L25 18Z" f="#eed699" w={1} />
    </>
  ),
  tabGeschoss: (
    <>
      <P d="M5 5V44M14 5V28M14 36V44" />
      <P d="M5 29H43V35H5Z" f={DARK} s={K} />
      <path d="M22 21H36L29 28Z" fill={K} />
    </>
  ),
  tabMess: (
    <>
      <P d="M6 9H33V43H6Z" f={LIGHT} />
      <P d="M11 17H28M11 23H28M11 30H28M11 36H28" />
      <P d="M40 2L46 7L31 22L26 17Z" f="#eed699" w={1} />
    </>
  ),
  tabArbeit: (
    <>
      <P d="M6 41V6" s={C} />
      <P d="M6 41L28 18" s={G} />
      <P d="M6 41H43" s={R} />
      <P d="M27 8L33 2V5H42V2L48 8L42 14V11H33V14Z" f={G} w={1} />
      <path d="M28 8L33 3V6H37V10H33V13Z" fill="#6f9ddf" />
    </>
  ),
  layout: (
    <>
      <P d="M4 11H43V40H4Z" f={LIGHT} />
      <P d="M43 32H27V40" />
    </>
  ),
  pdf: (
    <>
      <g transform="translate(4 -1) scale(.82 .7)">
        <Disk />
      </g>
      <T x={24} y={44} size={13}>
        PDF|DXF
      </T>
    </>
  ),
  solidPfeil: (
    <>
      <g transform="translate(0 8) scale(.82)">
        <Solid />
      </g>
      <Arrow x={27} />
    </>
  ),
  solid: <Solid />,
  blatt: (
    <>
      <P d="M9 5H39V43H9Z" f={LIGHT} w={3} />
      <P d="M15 17H33M15 25H33M15 33H33" s={R} w={2} />
    </>
  ),
  fenster: (
    <>
      <P d="M5 9H43V40H5Z" f={LIGHT} w={3} />
      <P d="M9 14H19V34H9ZM26 14H38V23H26ZM26 29H38V36H26Z" />
    </>
  ),
  buecher: (
    <>
      <P d="M10 6H22V44H10ZM10 13H22M10 36H22" f={LIGHT} />
      <P d="M25 7L32 5L44 42L37 44ZM27 14L35 12M34 36L42 34" f={LIGHT} />
    </>
  ),
  muster: (
    <>
      <P d="M18 8L30 20L20 30L8 20Z" f={LIGHT} />
      <P d="M30 20L40 29L32 38L24 29Z" f={DARK} />
      <P d="M22 28L30 36L21 46L14 38Z" f={MID} />
    </>
  ),
  kugel: (
    <>
      <O x={24} y={24} r={16} f="#7ba3dd" w={3} />
      <path d="M14 22C14 14 20 10 26 11C22 14 20 18 18 25Z" fill="#d8e6fa" />
    </>
  ),
  info: (
    <>
      <P d="M5 7H43V41H5Z" f={LIGHT} />
      <path d="M4 6H44V14H4Z" fill={K} />
      <circle cx={33} cy={10} r={2} fill="#fff" />
      <circle cx={39} cy={10} r={2} fill="#fff" />
      <T x={24} y={37} size={26} fill={B}>
        i
      </T>
    </>
  ),
  eigenschaften: (
    <>
      <P d="M8 9H36V43H8Z" f={LIGHT} w={3} />
      <P d="M20 17H31M20 23H31M20 30H31M20 36H31M13 17H16M13 23H16M13 30H16M13 36H16" />
      <Knobs x={35} y={13} />
    </>
  ),
  // dialog tree
  ordnerOffen: (
    <>
      <P d="M4 37V9H14L17 13H38V37Z" f="#f0dca0" />
      <P d="M5 37L12 23H45L38 37Z" f="#e0be62" />
    </>
  ),
  ordner: (
    <>
      <P d="M7 36V10H19L22 14V36Z" f="#f0dca0" />
      <P d="M7 14H41V37H7Z" f="#e0be62" />
    </>
  ),
  d1: (
    <>
      <O x={24} y={24} r={20} f={LIGHT} />
      <P d="M10 18H38M10 30H38M29 10V26M19 22V38" w={3} />
    </>
  ),
  d2: (
    <>
      <P
        d="M20 5H28L29 11L34 14L40 11L44 18L39 22V27L44 31L40 38L34 35L29 38L28 44H20L19 38L14 35L8 38L4 31L9 27V22L4 18L8 11L14 14L19 11Z"
        f={MID}
      />
      <O x={24} y={25} r={8} f="#fff" w={3} />
    </>
  ),
  d3: (
    <>
      <P d="M5 10H43V35H5Z" f="#fff" />
      <path d="M4 31H44V36H4ZM20 36H28V40H34V43H14V40H20Z" fill={K} />
    </>
  ),
  d4: (
    <>
      <P d="M33 39H6V9H43V22" f={LIGHT} />
      <P d="M11 17H30M11 23H24M11 29H26" />
      <path d="M31 18L45 32L39 33L43 40L40 42L36 35L31 38Z" fill={K} />
    </>
  ),
  d5: (
    <>
      <O x={24} y={24} r={19} f={MID} />
      <path d="M10 12Q20 4 26 7L23 14L27 17L20 24L14 22L10 28L6 22ZM25 22L36 20L40 27L34 33L31 41L26 36V29L22 27ZM32 8L41 15L37 18L31 14ZM12 30L18 34L16 40L10 34Z" fill={K} />
    </>
  ),
};

const Icon = ({ name, size = 'size-12' }: { name: string; size?: string }) => (
  <svg viewBox="0 0 48 48" className={clsx(size, 'shrink-0 overflow-visible')} aria-hidden="true">
    {icons[name]}
  </svg>
);

const Sep = () => (
  <div className="flex w-4 shrink-0 justify-center self-stretch">
    <div className="w-px bg-[#d0d0d0]" />
  </div>
);

const Grip = ({ first = false }: { first?: boolean }) => (
  <div className={clsx('flex shrink-0 items-center justify-center self-stretch py-1.5', first ? 'w-2.5' : 'w-3')}>
    <div className="h-full border-l-2 border-dotted border-[#9a9a9a]" />
  </div>
);

const More = () => (
  <button aria-label="Mehr" className="flex h-[58px] w-[22px] shrink-0 items-end justify-center pb-1.5">
    <svg viewBox="0 0 10 8" className="h-2 w-2.5">
      <path d="M0 1H10L5 8Z" fill="#777" />
    </svg>
  </button>
);

const Tools = ({ names, active }: { names: string[]; active?: string }) => (
  <>
    {names.map((n) => (
      <button
        key={n}
        aria-label={n}
        className={clsx('flex h-[58px] w-[61px] shrink-0 items-center justify-center', n === active && 'bg-[#c5d3ea]')}
      >
        <Icon name={n} />
      </button>
    ))}
  </>
);

const Combo = ({ label, value, className }: { label: string; value: string; className: string }) => (
  <div className={clsx('relative', className)}>
    <select
      aria-label={label}
      defaultValue={value}
      className="h-10 w-full appearance-none border border-[#cfcfcf] bg-white pl-1 text-[22px] leading-8 text-[#3b3b3b] outline-none"
    >
      <option>{value}</option>
    </select>
    <svg viewBox="0 0 10 7" className="pointer-events-none absolute top-4 right-4 h-2 w-2.5">
      <path d="M0 0H10L5 7Z" fill="#777" />
    </svg>
  </div>
);

const PanelTitle = ({ title, className }: { title: string; className?: string }) => (
  <div className={clsx('flex items-center', className)}>
    <h2 className="flex-1 text-[34px] leading-[60px] text-[#3b3b3b]">{title}</h2>
    <button aria-label="Menü" className="flex w-9 justify-center">
      <svg viewBox="0 0 18 10" className="h-2.5 w-[18px]">
        <path d="M0 0H18L9 10Z" fill="#777" />
      </svg>
    </button>
    <button aria-label="Anheften" className="flex w-9 justify-center">
      <svg viewBox="0 0 16 20" className="h-5 w-4">
        <path d="M3 1H13V12M3 1V12M1 12H15M8 12V19M11 1V12" stroke="#777" strokeWidth={2} fill="none" />
      </svg>
    </button>
    <button aria-label="Schließen" className="flex w-9 justify-center">
      <svg viewBox="0 0 16 16" className="size-4">
        <path d="M1 1L15 15M15 1L1 15" stroke="#777" strokeWidth={3} />
      </svg>
    </button>
  </div>
);

const Search = ({ color }: { color: string }) => (
  <svg viewBox="0 0 30 30" className="size-[30px] shrink-0">
    <circle cx={18} cy={12} r={10} fill="none" stroke={color} strokeWidth={2} />
    <path d="M11 19L2 28" stroke={color} strokeWidth={4} />
  </svg>
);

const menus = [
  'Datei', 'Bearbeiten', 'Ansicht', 'Einfügen', 'Zeichnen', 'AR-Objekte', 'Ändern', 'Ausfertigen',
  'Information', 'Extras', 'Einstellungen', 'Fenster', 'Tastenkombinationen', '?',
];

const TitleBar = () => (
  <header className="flex h-[46px] shrink-0 items-center border-b border-[#e6e6e6]">
    <svg viewBox="0 0 32 32" className="ml-2 size-8">
      <rect width={32} height={32} fill="#dcdcdc" />
      <rect x={3} y={4} width={26} height={25} fill="#f2f2f2" stroke="#222" strokeWidth={2} />
      <text x={15} y={24} fontSize={19} textAnchor="middle" fill="#222" fontFamily="Open Sans, sans-serif">
        A
      </text>
      <path d="M26 2L31 5L26 8L21 5ZM21 7L26 10L31 7M21 10L26 13L31 10" stroke={R} fill="#fff" />
    </svg>
    <svg viewBox="0 0 32 32" className="ml-10 size-8">
      <rect width={32} height={32} fill="#d6d6d6" />
      <path d="M16 3L26 8V24L16 30L6 24V8M6 8L16 3M6 8L16 14L26 8M6 15L16 21L26 15M6 21L16 27L26 21" stroke="#d6372c" fill="none" />
    </svg>
    <h1 className="ml-[26px] flex-1 text-[24px] whitespace-pre text-[#aeaeae]">
      {'Proj:<CAD_Objekt1> Bauk:<EFH>  Gesch:<EG>  Datei:<unbenannt.d> ELITECAD - [Modell]'}
    </h1>
    <label className="flex h-9 w-[440px] items-center border border-[#9b9b9b] pl-0.5">
      <Search color="#6f6f6f" />
      <input
        aria-label="Was möchtest du tun?"
        placeholder="Was möchtest du tun?"
        className="ml-2 w-full text-[22px] outline-none placeholder:text-[#6f6f6f]"
      />
    </label>
    <button aria-label="Info" className="ml-6 flex w-[52px] items-center">
      <svg viewBox="0 0 52 44" className="h-11 w-[52px]">
        <circle cx={16} cy={22} r={13} fill={LIGHT} stroke={K} />
        <text x={16} y={31} fontSize={24} fontWeight={700} fill={B} textAnchor="middle" fontFamily="Open Sans, sans-serif">
          i
        </text>
        <circle cx={39} cy={31} r={10} fill="#a35bd8" />
        <text x={39} y={37} fontSize={17} fill="#fff" textAnchor="middle" fontFamily="Liberation Sans, sans-serif">
          5
        </text>
      </svg>
    </button>
    <button aria-label="Minimieren" className="flex w-[73px] justify-center">
      <span className="mt-2 block h-1 w-3 bg-[#bdbdbd]" />
    </button>
    <button aria-label="Wiederherstellen" className="flex w-[73px] justify-center">
      <svg viewBox="0 0 18 18" className="size-[18px]">
        <path d="M6 6V2H16V10H12M2 7H11V16H2Z" fill="none" stroke="#bdbdbd" strokeWidth={3} />
      </svg>
    </button>
    <button aria-label="Beenden" className="flex w-[73px] justify-center">
      <svg viewBox="0 0 16 16" className="size-4">
        <path d="M1 1L15 15M15 1L1 15" stroke="#bdbdbd" strokeWidth={3} />
      </svg>
    </button>
  </header>
);

const sections: { title: string; items: string[] }[] = [
  { title: 'Hilfslinien', items: ['h1', 'h2', 'h3', 'h4', 'h5', 'h6', 'h7', 'h8', 'h9'] },
  { title: 'Elemente', items: ['e1', 'e2', 'e3', 'e4', 'e5', 'e6', 'e7', 'e8', 'e9', 'e10', 'e11', 'e12', 'e13', 'e14', 'e15', 'e16'] },
  {
    title: 'Bauteile',
    items: [
      'b1', 'b2', 'b3', 'b4', 'b5', 'b6', 'b7', 'b8', 'b9', 'b10',
      'b11', 'b12', 'b13', 'b14', 'b15', 'b16', 'b17', 'b18', 'b19', 'b20',
    ],
  },
  { title: 'Erweiterte Wandfunktionen', items: [] },
  { title: 'Erweiterte Dachfunktionen', items: [] },
  { title: 'Ausfertigung', items: ['a1', 'a2', 'a3', 'a4', 'a5', 'a6', 'a7', 'a8', 'a9', 'a10', 'a11', 'a12', 'a13', 'a14', 'a15'] },
  { title: 'Freiformen', items: ['f1', 'f2', 'f3', 'f4', 'f5', 'f6', 'f7', 'f8', 'f9', 'f10', 'f11', 'f12', 'f13', 'f14'] },
  { title: 'Gelände', items: [] },
  { title: 'Umbauplanung', items: [] },
  { title: 'Kamera', items: [] },
  { title: 'Auswertung', items: [] },
  { title: 'BIM Werkzeuge', items: [] },
  { title: '3D Plattformen', items: [] },
];

const ToolPanel = () => (
  <aside className="w-[352px] shrink-0 border-r-3 border-[#f0f0f0]">
    <PanelTitle title="Werkzeuge" className="pl-1" />
    <label className="flex h-[52px] items-center border border-[#cfcfcf] pr-1 pl-3">
      <input aria-label="Suchen" placeholder="Suchen" className="w-full text-[22px] outline-none placeholder:text-[#6f6f6f]" />
      <Search color="#2b5ea9" />
    </label>
    {sections.map((s) => (
      <section key={s.title}>
        <button className="flex h-9 w-full items-center text-[22px] font-bold whitespace-nowrap text-[#3b3b3b]">
          <svg viewBox="0 0 32 18" className="h-[18px] w-8 shrink-0">
            {s.items.length > 0 ? (
              <path d="M10 15H24V2Z" fill="#a3a3a3" />
            ) : (
              <path d="M12 1V16L21 9Z" fill="#fff" stroke="#b0b0b0" />
            )}
          </svg>
          {s.title}
        </button>
        {s.items.length > 0 && (
          <div className="grid w-[309px] grid-cols-5 pt-2 pb-3 pl-[9px]">
            {s.items.map((n) => (
              <button key={n} aria-label={n} className="flex h-[60px] items-center justify-center">
                <Icon name={n} />
              </button>
            ))}
          </div>
        )}
      </section>
    ))}
  </aside>
);

const viewTools = Array.from({ length: 33 }, (_, i) => `v${i + 1}`);
const activeViews = ['v17', 'v30', 'v31', 'v32', 'v33'];

const Workspace = () => (
  <main className="flex min-w-0 flex-1 flex-col">
    <div className="flex min-h-0 flex-1 justify-center">
      {/* sheet with its centre mark */}
      <div className="mx-[274px] flex flex-1 justify-center border-x border-t border-black">
        <svg viewBox="0 0 64 32" className="mr-[420px] h-8 w-16">
          <path d="M0 1H64" stroke="#000" strokeWidth={2} />
          <path d="M32 0V32" stroke="#000" />
        </svg>
      </div>
    </div>
    <div className="flex h-[41px] items-start border-t border-[#e6e6e6]">
      <svg viewBox="0 0 38 36" className="h-9 w-[38px]">
        <path d="M0 0H38V35H36Z" fill="#efefef" />
        <path d="M0 0L36 35H38" fill="none" stroke="#999" />
      </svg>
      <div className="flex h-9 w-[187px] items-center border-r border-b border-[#8f8f8f] bg-[#efefef] pl-4">
        <Icon name="solid" size="size-8" />
        <span className="ml-4 text-[22px] font-bold">Modell</span>
        <button aria-label="Ansicht schließen" className="ml-5">
          <svg viewBox="0 0 16 16" className="size-4">
            <path d="M1 1L15 15M15 1L1 15" stroke="#777" strokeWidth={3} />
          </svg>
        </button>
      </div>
      <button aria-label="Ansichten" className="mr-1 ml-auto self-center">
        <svg viewBox="0 0 18 10" className="h-2.5 w-[18px]">
          <path d="M0 0H18L9 10Z" fill="#777" />
        </svg>
      </button>
    </div>
    <div className="flex h-[74px] items-center border-t-2 border-[#e9e9e9] px-2 pb-1">
      {viewTools.map((n) => (
        <div key={n} className="flex w-[55px] shrink-0 justify-center">
          <button
            aria-label={n}
            className={clsx(
              'flex size-[53px] items-center justify-center',
              activeViews.includes(n) && 'border border-[#2b579a] bg-[#c5d3ea]',
            )}
          >
            <Icon name={n} />
          </button>
        </div>
      ))}
      <div className="ml-auto flex items-center gap-2">
        <Icon name="wandtyp" />
        <Combo label="Planungsphase" value="Entwurfsplanung" className="ml-1 w-[383px]" />
        <Combo label="Einschränkung" value="Keine Einschränkung" className="w-[383px]" />
      </div>
    </div>
    <div className="flex h-[54px] items-start gap-2 px-2">
      <input
        aria-label="Befehlszeile"
        className="h-[42px] flex-1 border-t border-b border-t-[#e6e6e6] border-b-[#8a8a8a] bg-[#efefef] outline-none"
      />
      <Combo label="Maßstab" value="1:100" className="mt-0.5 w-[332px]" />
      <Combo label="Einheit" value="cm" className="mt-0.5 w-[248px]" />
      <Combo label="Papierformat" value="A3" className="mt-0.5 w-[248px]" />
    </div>
  </main>
);

const storeyRows = [
  { label: '', icon: 'platte' },
  { label: '1', icon: 'wandGrau' },
  { label: '0', icon: 'wandBlau' },
];

const dockTabs = ['fenster', 'ebenen', 'buecher', 'muster', 'kugel'];
const views = ['Modellansichten', 'Ansichten', 'Schnitte', 'Grundrisse', 'Details', 'Plots', 'Layoutvorlagen', 'Referenz'];

const RightPanel = () => (
  <aside className="flex w-[442px] shrink-0 flex-col border-l-2 border-[#ececec]">
    <PanelTitle title="Geschoss" className="pl-3.5" />
    <div className="flex h-[67px] items-center">
      {['g1', 'g2', 'g3', 'g4', 'g5', 'g6'].map((n) => (
        <button key={n} aria-label={n} className="flex w-[65px] justify-center">
          <Icon name={n} />
        </button>
      ))}
    </div>
    <div className="flex h-[465px] bg-[#efefef]">
      <table className="h-full border-collapse text-[22px] leading-10 text-black">
        <thead>
          <tr className="h-[50px] bg-white">
            <th className="w-[65px] border-r border-b border-[#c4c4c4] p-0">
              <span className="flex justify-center">
                <Icon name="platte" />
              </span>
            </th>
            <th className="w-[66px] border-r border-b border-[#c4c4c4] p-0">
              <span className="flex justify-center">
                <Icon name="gebaeude" />
              </span>
            </th>
          </tr>
        </thead>
        <tbody>
          {storeyRows.map((r) => (
            <tr key={r.icon} className="h-10">
              <td className="border-r border-[#c4c4c4] p-0 pr-1 text-center">{r.label}</td>
              <td className="border-r border-[#c4c4c4] p-0">
                <span className="flex h-10 items-center justify-center">
                  <Icon name={r.icon} />
                </span>
              </td>
            </tr>
          ))}
          <tr>
            <td className="border-r border-[#c4c4c4]" />
            <td className="border-r border-[#c4c4c4]" />
          </tr>
        </tbody>
      </table>
    </div>
    <div className="flex h-[59px] items-start border-b-3 border-[#ececec] text-[22px] text-[#3b3b3b]">
      <button className="flex h-[54px] w-[145px] items-center gap-3 border-r border-b border-l border-[#9b9b9b] pl-1">
        <Icon name="tabGeschoss" />
        Gesc...
      </button>
      <button className="flex h-[54px] w-[142px] items-center gap-1 pl-2">
        <Icon name="tabMess" />
        Mess...
      </button>
      <button className="flex h-[54px] items-center gap-1.5 pl-2">
        <Icon name="tabArbeit" />
        Arbeit...
      </button>
    </div>
    <PanelTitle title="Ansicht" className="pl-3.5" />
    <div className="flex h-[66px] items-center">
      <button aria-label="Layout" className="flex w-16 justify-center">
        <Icon name="layout" />
      </button>
      <button aria-label="Layout wählen" className="flex w-8 justify-center">
        <svg viewBox="0 0 10 5" className="h-[5px] w-2.5">
          <path d="M0 0H10L5 5Z" />
        </svg>
      </button>
      <button className="w-16 text-center text-[31px] leading-10 font-bold text-[#4f4f4f]">3D</button>
      {['pdf', 'g6', 'solidPfeil'].map((n) => (
        <button key={n} aria-label={n} className="flex w-16 justify-center">
          <Icon name={n} />
        </button>
      ))}
    </div>
    <ul className="flex-1 text-[22px] leading-9 font-bold text-[#3b3b3b]">
      <li className="flex h-9 items-center">
        <svg viewBox="0 0 16 10" className="ml-2 h-2.5 w-4">
          <path d="M1 1L8 8L15 1" fill="none" stroke="#111" strokeWidth={3} />
        </svg>
        <span className="ml-2 flex items-center gap-1.5">
          <Icon name="solid" size="size-8" />
          <Icon name="blatt" size="size-7" />
        </span>
        <span className="ml-1.5 text-[#1f62c6]">Modell</span>
      </li>
      {views.map((v, i) => (
        <li key={v} className="flex h-9 items-center">
          <svg viewBox="0 0 40 16" className="h-4 w-10">
            {i === 0 && <path d="M13 1L20 8L13 15" fill="none" stroke="#888" strokeWidth={3} />}
          </svg>
          {v}
        </li>
      ))}
    </ul>
    <div className="flex h-[55px] items-start border-t border-[#e6e6e6] text-[22px] text-[#3b3b3b]">
      {dockTabs.map((n, i) => (
        <button
          key={n}
          aria-label={n}
          className={clsx(
            'flex h-[52px] w-[87px] shrink-0 items-center pl-1.5',
            i === 0 && 'border-r border-b border-l border-[#9b9b9b]',
          )}
        >
          <Icon name={n} />
          <span className="ml-2">...</span>
        </button>
      ))}
    </div>
  </aside>
);

const SideTab = ({ icon, label, className }: { icon: string; label: string; className: string }) => (
  <button className={clsx('flex w-full justify-between border-r-6 border-[#d0d0d0] pl-1.5', className)}>
    <span className="flex flex-col items-center gap-1.5">
      <Icon name={icon} />
      <span className="font-['Liberation_Sans',sans-serif] text-[24px] leading-6 text-[#3b3b3b] [writing-mode:vertical-rl]">
        {label}
      </span>
    </span>
  </button>
);

const Check = ({ label, on = false, className }: { label: string; on?: boolean; className?: string }) => {
  const [checked, setChecked] = useState(on);
  return (
    <label className={clsx('flex items-center gap-[7px]', className)}>
      <span className="relative flex size-[25px] shrink-0">
        <input
          type="checkbox"
          checked={checked}
          onChange={(e) => setChecked(e.target.checked)}
          className="size-full appearance-none rounded-[5px] border-2 border-[#6b6b6b] bg-[#f6f6f6] checked:border-[#005fb8] checked:bg-[#005fb8]"
        />
        {checked && (
          <svg viewBox="0 0 25 25" className="pointer-events-none absolute inset-0 size-full">
            <path d="M7 13L11 17L18 9" fill="none" stroke="#fff" strokeWidth={2} />
          </svg>
        )}
      </span>
      {label}
    </label>
  );
};

const DialogSelect = ({ id, value, className }: { id: string; value: string; className: string }) => (
  <div className={clsx('relative', className)}>
    <select
      id={id}
      defaultValue={value}
      className="h-10 w-full appearance-none rounded-[3px] border border-[#d0d0d0] border-b-[#b8b8b8] bg-[#fdfdfd] pl-1 outline-none"
    >
      <option>{value}</option>
    </select>
    <svg viewBox="0 0 14 8" className="pointer-events-none absolute top-4 right-2 h-2 w-3.5">
      <path d="M1 1L7 7L13 1" fill="none" stroke="#444" />
    </svg>
  </div>
);

const Toggle = ({ open }: { open: boolean }) => (
  <svg viewBox="0 0 18 18" className="size-[18px]">
    <rect x={0} y={0} width={18} height={18} fill="#f7f7f7" stroke="#919191" strokeWidth={2} />
    <path d={open ? 'M4 9H14' : 'M4 9H14M9 4V14'} stroke="#3a58a8" strokeWidth={2} />
  </svg>
);

const systemPages = [
  { label: 'Konfiguration', icon: 'd1' },
  { label: 'Allgemein', icon: 'd2' },
  { label: 'Oberfläche', icon: 'd3' },
  { label: 'Tooltips', icon: 'd4' },
  { label: 'Region', icon: 'd5' },
];

const OptionsTree = () => (
  <ul className="mb-1 w-[438px] shrink-0 border border-[#828790] bg-white pt-0.5 pl-[18px]">
    <li className="flex h-12 items-center">
      <Toggle open />
      <span className="w-4 border-t border-dotted border-[#808080]" />
      <Icon name="ordnerOffen" />
      <span className="ml-2">System</span>
    </li>
    <li className="relative">
      {/* trunk of the tree running past the open branch */}
      <span className="absolute top-[-15px] bottom-0 left-[9px] border-l border-dotted border-[#808080]" />
      <ul className="pl-[60px]">
        {systemPages.map((c, i) => (
          <li key={c.label} className="relative flex h-12 items-center">
            <span
              className={clsx(
                'absolute top-0 left-0 border-l border-dotted border-[#808080]',
                i === systemPages.length - 1 ? 'h-6' : 'h-12',
              )}
            />
            <span className="ml-15 w-6 border-t border-dotted border-[#808080] first:ml-0 [&:nth-child(2)]:ml-0" />
            <Icon name={c.icon} />
            <span
              className={clsx('ml-1 flex h-12 items-center px-0.5', c.label === 'Oberfläche' && 'bg-[#f0f0f0]')}
            >
              {c.label}
            </span>
          </li>
        ))}
      </ul>
    </li>
    {['Speichern/Laden', 'Arbeitsparameter', 'Darstellung', 'Ansichten'].map((label, i) => (
      <li key={label} className="relative flex h-12 items-center">
        <span
          className={clsx('absolute top-0 left-[9px] border-l border-dotted border-[#808080]', i === 3 ? 'h-6' : 'h-12')}
        />
        <span className="relative">
          <Toggle open={false} />
        </span>
        <span className="w-4 border-t border-dotted border-[#808080]" />
        <Icon name="ordner" />
        <span className="ml-2">{label}</span>
      </li>
    ))}
  </ul>
);

const OptionsDialog = () => (
  <div
    role="dialog"
    aria-label="Optionen - System - Oberfläche"
    className="flex h-[824px] w-[1275px] flex-col overflow-hidden rounded-[18px] border-2 border-[#1467c4] bg-white text-[23px] text-black shadow-[0_50px_90px_0_rgba(0,0,0,0.3),0_0_40px_0_rgba(0,0,0,0.14)]"
  >
    <div className="flex h-[56px] shrink-0 items-center justify-between pr-6 pl-3">
      <h2>Optionen - System - Oberfläche</h2>
      <button aria-label="Schließen">
        <svg viewBox="0 0 22 22" className="size-[22px]">
          <path d="M1 1L21 21M21 1L1 21" stroke="#111" strokeWidth={2} />
        </svg>
      </button>
    </div>
    <div className="flex flex-1 bg-[#f0f0f0]">
      <OptionsTree />
      <div className="flex flex-1 flex-col pr-[29px] pl-8">
        <fieldset className="mt-3 h-[499px] border border-[#dcdcdc] pr-1.5 pl-[34px]">
          <legend className="-ml-7 leading-[34px]">Oberfläche allgemein</legend>
          <div className="-mt-1 flex items-start justify-between">
            <label htmlFor="layout" className="pt-2.5 leading-8">
              Ansichtslayout
            </label>
            <DialogSelect id="layout" value="Ansichten im Registerkartenformat" className="w-[415px]" />
          </div>
          <div className="mt-6 flex items-center justify-between pr-[150px]">
            <label htmlFor="max">Maximal geöffnete Ansichten</label>
            <input
              id="max"
              defaultValue="16"
              className="h-[51px] w-[101px] border border-[#e4e4e4] border-b-[#808080] bg-white pb-3 pl-2 outline-none"
            />
          </div>
          <Check label="Neue Ansichten immer in neuem Fenster öffnen" className="mt-1 h-12" />
          <Check label="Register nach Ansichtstyp einfärben" on className="h-12" />
          <div className="mt-3 flex items-start justify-between pr-[149px] pl-1">
            <label htmlFor="design" className="pt-2 leading-8">
              Oberflächen-Design
            </label>
            <DialogSelect id="design" value="Weiß" className="w-[266px]" />
          </div>
          <Check label="Auch in Dialogen" className="mt-2 ml-[316px] h-12" />
          <Check label="Bildlaufleiste für Grafikfenster verwenden" className="h-10" />
          <Check label="Benachrichtigungen als Infoblase anzeigen" on className="mt-1 h-12" />
          <Check label="Welcomescreen beim Start anzeigen" on className="h-12" />
        </fieldset>
        <div className="mt-auto mb-3 -ml-[22px] flex items-center gap-2.5">
          <Check label="Erweitert" on className="mr-auto" />
          {['OK', 'Abbrechen', 'Hilfe'].map((b) => (
            <button key={b} className="h-[54px] w-40 rounded-[5px] border border-[#d2d2d2] border-b-[#bcbcbc] bg-[#fdfdfd]">
              {b}
            </button>
          ))}
        </div>
      </div>
    </div>
  </div>
);

const App: React.FC = () => {
  return (
    <div className="flex h-screen flex-col bg-white font-['Open_Sans',sans-serif] leading-normal">
      <TitleBar />
      <nav className="flex h-[62px] shrink-0 items-center text-[22px] text-[#3b3b3b]">
        <Grip first />
        <ul className="flex gap-[29px] pl-3">
          {menus.map((m) => (
            <li key={m}>
              <button>{m}</button>
            </li>
          ))}
        </ul>
      </nav>
      <div className="flex h-[62px] shrink-0 items-center">
        <Grip first />
        <Tools names={['neu', 'oeffnen', 'speichern', 'drucken', 'vorschau', 'oeffnenZeit', 'speichernZeit']} />
        <Sep />
        <Tools names={['schneiden', 'kopieren', 'einfuegen']} />
        <Sep />
        <Tools names={['undo', 'redo']} />
        <More />
        <Grip />
        <Tools names={['plus', 'minus']} />
        <Sep />
        <Tools names={['dupl', 'duplBlau', 'drehen', 'spiegeln', 'skalieren', 'gruppe']} />
        <Sep />
        <Tools names={['strecken', 'trim1', 'trim2', 'trim3', 'radierer', 'radierLinie']} />
        <More />
        <Grip />
        <Tools names={['box0', 'boxB', 'boxL', 'boxT', 'boxR', 'boxX', 'pyramide', 'boxVor', 'boxNach', 'camVor', 'camNach']} />
        <More />
        <Grip />
        <Tools names={['wandKopie', 'hoehe', 'pinsel', 'hausDrehen', 'traeger', 'bogenWand', 'dreiD', 'lampe', 'kamera']} />
        <More />
      </div>
      <div className="flex h-[65px] shrink-0 items-center">
        <Grip first />
        <Tools names={['stop', 'auswahl', 'ebenen', 'rechteck', 'polySel', 'pickSet']} active="auswahl" />
        <More />
        <Grip />
        <div className="ml-auto flex w-[1326px] items-center">
          <Grip />
          <div className="ml-2">
            <Icon name="ebenen" />
          </div>
          <Combo label="Ebene" value="Wand" className="mr-10 ml-2.5 w-[308px]" />
          <Grip />
        </div>
      </div>
      <div className="flex min-h-0 flex-1">
        <div className="flex min-w-0 flex-1 flex-col">
          <div className="flex min-h-0 flex-1">
            <ToolPanel />
            <Workspace />
            <RightPanel />
          </div>
          <footer className="mb-0.5 flex h-[37px] shrink-0 items-center bg-[#2b579a] pt-1 pl-1 text-[22px] text-white">
            <span>Bereit</span>
            <span className="mr-[60px] ml-auto">Z-12</span>
            <span className="mr-4">GPU 8,4GB frei</span>
            <span className="mr-2">NUM</span>
            <span className="text-[#5c9cf0]">UF</span>
          </footer>
        </div>
        <div className="flex w-[70px] shrink-0 flex-col gap-5 pt-1.5">
          <SideTab icon="info" label="Infofenster" className="h-[164px]" />
          <SideTab icon="eigenschaften" label="Eigenschaften" className="h-[208px]" />
        </div>
      </div>
      <div className="pointer-events-none fixed inset-0 flex items-center justify-center pr-0.5 pb-3.5">
        <div className="pointer-events-auto">
          <OptionsDialog />
        </div>
      </div>
    </div>
  );
};

export default App;
